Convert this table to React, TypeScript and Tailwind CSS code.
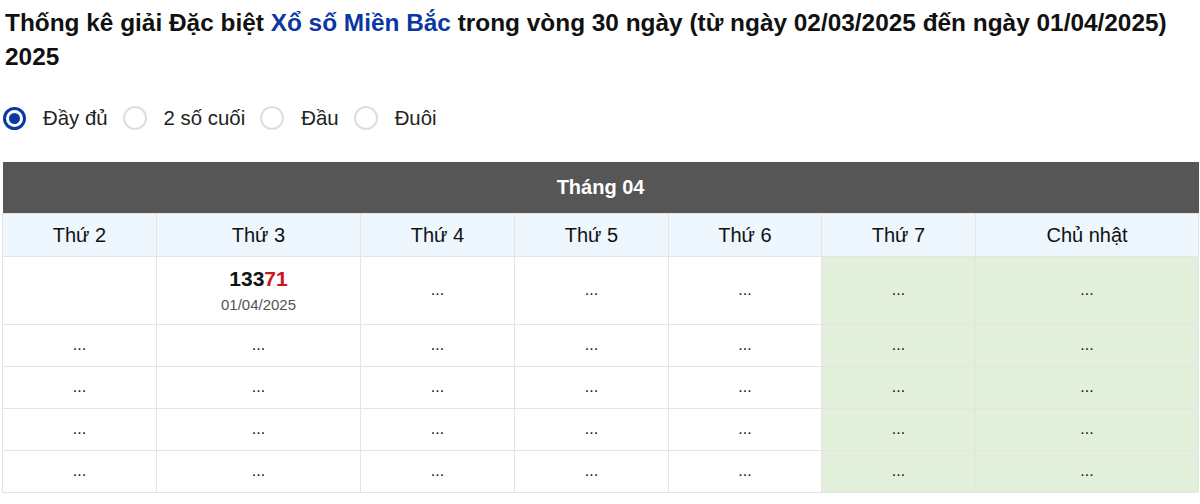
const days = ["Thứ 2", "Thứ 3", "Thứ 4", "Thứ 5", "Thứ 6", "Thứ 7", "Chủ nhật"];
const widths = ["w-[154px]", "w-[204px]", "w-[154px]", "w-[154px]", "w-[153px]", "w-[154px]", "w-[223px]"];

const options = [
  { label: "Đầy đủ", checked: true },
  { label: "2 số cuối", checked: false },
  { label: "Đầu", checked: false },
  { label: "Đuôi", checked: false },
];

function Radio({ checked }: { checked: boolean }) {
  if (checked) {
    return (
      <span className="flex h-[23px] w-[23px] items-center justify-center rounded-full border-[3px] border-[#0b37a5] bg-white">
        <span className="h-[11px] w-[11px] rounded-full bg-[#0b37a5]" />
      </span>
    );
  }
  return <span className="h-[24px] w-[24px] rounded-full border-2 border-[#dedede] bg-white" />;
}

function Cell({ col, children, tall }: { col: number; children?: React.ReactNode; tall?: boolean }) {
  const weekend = col >= 5;
  return (
    <td
      className={`${tall ? "h-[68px]" : "h-[42px]"} border border-[#e4e4e4] text-center align-middle ${
        weekend ? "bg-[#e1efdb]" : "bg-white"
      }`}
    >
      {children}
    </td>
  );
}

const Dots = () => <span className="text-[16px] text-[#222]">...</span>;

export default function App() {
  const rows = [0, 1, 2, 3];
  return (
    <div className="min-h-[504px] bg-white px-[2px] font-['Liberation_Sans',Arial,sans-serif] text-[#111]">
      <h1 className="pl-[3px] pt-[6px] text-[24.4px] font-bold leading-[34px] text-[#111]">
        Thống kê giải Đặc biệt <span className="text-[#0b37a5]">Xổ số Miền Bắc</span> trong vòng 30 ngày (từ ngày
        02/03/2025 đến ngày 01/04/2025) 2025
      </h1>

      <div className="mt-[32px] flex items-center pl-[1px]">
        {options.map((o) => (
          <label key={o.label} className="mr-[15px] flex items-center">
            <Radio checked={o.checked} />
            <span className="ml-[17px] text-[20.4px] leading-[24px] text-[#222]">{o.label}</span>
          </label>
        ))}
      </div>

      <table className="mt-[32px] w-[1196px] table-fixed border-collapse">
        <colgroup>
          {widths.map((w, i) => (
            <col key={i} className={w} />
          ))}
        </colgroup>
        <thead>
          <tr>
            <th colSpan={7} className="h-[51px] bg-[#565656] text-center text-[20px] font-bold text-white">
              Tháng 04
            </th>
          </tr>
          <tr>
            {days.map((d) => (
              <th
                key={d}
                className="h-[43px] border border-[#e4e4e4] bg-[#eef6fe] text-center text-[20px] font-normal text-[#111]"
              >
                {d}
              </th>
            ))}
          </tr>
        </thead>
        <tbody>
          <tr>
            <Cell col={0} tall />
            <Cell col={1} tall>
              <div className="flex flex-col items-center">
                <span className="text-[21px] font-bold leading-[26px] text-[#111]">
                  133<span className="text-[#d0121b]">71</span>
                </span>
                <span className="mt-[4px] text-[15px] leading-[18px] text-[#555]">01/04/2025</span>
              </div>
            </Cell>
            {[2, 3, 4, 5, 6].map((c) => (
              <Cell key={c} col={c} tall>
                <Dots />
              </Cell>
            ))}
          </tr>
          {rows.map((r) => (
            <tr key={r}>
              {[0, 1, 2, 3, 4, 5, 6].map((c) => (
                <Cell key={c} col={c}>
                  <Dots />
                </Cell>
              ))}
            </tr>
          ))}
        </tbody>
      </table>
    </div>
  );
}
